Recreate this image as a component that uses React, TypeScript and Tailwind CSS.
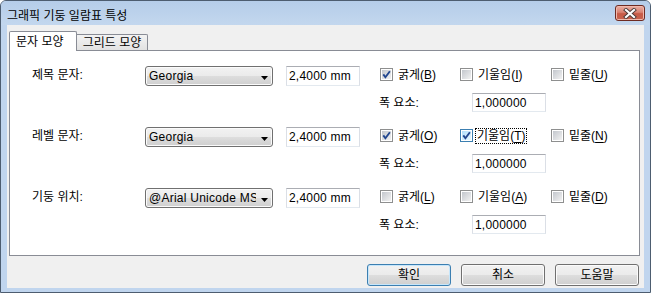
// 그래픽 기둥 일람표 특성 — Win7 basic 스타일 대화상자

const FONT = "font-['Liberation_Sans','Noto_Sans_CJK_KR',sans-serif]";

const BTN_BG =
  "bg-[linear-gradient(to_bottom,#f2f2f2_0%,#ebebeb_48%,#dddddd_52%,#cfcfcf_100%)]";

type CheckItem = {
  pre: string;
  key: string;
  checked?: boolean;
  focused?: boolean;
  width: string;
};

type Row = {
  label: string;
  font: string;
  size: string;
  checks: CheckItem[];
  factor: string;
};

const ROWS: Row[] = [
  {
    label: "제목 문자:",
    font: "Georgia",
    size: "2,4000 mm",
    factor: "1,000000",
    checks: [
      { pre: "굵게", key: "B", checked: true, width: "w-[80px]" },
      { pre: "기울임", key: "I", width: "w-[91px]" },
      { pre: "밑줄", key: "U", width: "w-[70px]" },
    ],
  },
  {
    label: "레벨 문자:",
    font: "Georgia",
    size: "2,4000 mm",
    factor: "1,000000",
    checks: [
      { pre: "굵게", key: "O", checked: true, width: "w-[80px]" },
      { pre: "기울임", key: "T", checked: true, focused: true, width: "w-[91px]" },
      { pre: "밑줄", key: "N", width: "w-[70px]" },
    ],
  },
  {
    label: "기둥 위치:",
    font: "@Arial Unicode MS",
    size: "2,4000 mm",
    factor: "1,000000",
    checks: [
      { pre: "굵게", key: "L", width: "w-[80px]" },
      { pre: "기울임", key: "A", width: "w-[91px]" },
      { pre: "밑줄", key: "D", width: "w-[70px]" },
    ],
  },
];

// ── 체크박스 ────────────────────────────
function CheckBox({ item }: { item: CheckItem }) {
  return (
    <div className={`flex items-center ${item.width}`}>
      <div
        className={
          item.focused
            ? "relative flex h-[13px] w-[13px] shrink-0 items-center justify-center border border-[#3c7fb1] bg-white"
            : "relative flex h-[13px] w-[13px] shrink-0 items-center justify-center border border-[#8e8f8f] bg-white"
        }
      >
        <div
          className={
            item.focused
              ? "h-[9px] w-[9px] bg-gradient-to-br from-[#b1dffd] to-[#e9f7fe]"
              : "h-[9px] w-[9px] bg-gradient-to-br from-[#c3c7cd] to-[#f2f2f2]"
          }
        />
        {item.checked && (
          <svg
            className="absolute left-0 top-0"
            width="11"
            height="11"
            viewBox="0 0 11 11"
          >
            <path
              d="M2.3 5.4 L4.4 8.2 L8.9 2.2"
              fill="none"
              stroke="#21468f"
              strokeWidth="1.9"
            />
          </svg>
        )}
      </div>
      <span
        className={
          item.focused
            ? "ml-[2px] border border-dotted border-black px-[1px] leading-[14px]"
            : "ml-[3px] border border-transparent px-[1px] leading-[14px]"
        }
      >
        {item.pre}(<span className="underline underline-offset-2">{item.key}</span>)
      </span>
    </div>
  );
}

// ── 콤보박스 ────────────────────────────
function Combo({ value }: { value: string }) {
  return (
    <div
      className={`flex h-[20px] w-[128px] shrink-0 items-center rounded-[3px] border border-[#707070] ${BTN_BG} shadow-[inset_0_0_0_1px_#fbfbfb]`}
    >
      <span className="mr-[5px] min-w-0 flex-1 overflow-hidden whitespace-nowrap pl-[3px] leading-[16px] tracking-[0.25px]">
        {value}
      </span>
      <svg className="mr-[4px] mt-[3px] shrink-0" width="7" height="4" viewBox="0 0 7 4">
        <path d="M0 0 H7 L3.5 4 Z" fill="#000" />
      </svg>
    </div>
  );
}

function TextBox({ value, h }: { value: string; h: string }) {
  return (
    <div
      className={`flex ${h} w-[74px] shrink-0 items-center border border-[#abadb3] border-x-[#dbdfe6] border-b-[#e3e9ef] bg-white pl-[2px] leading-[16px] tracking-[0.2px]`}
    >
      {value}
    </div>
  );
}

function Button({ label, primary }: { label: string; primary?: boolean }) {
  return (
    <div
      className={
        primary
          ? `flex h-[22px] w-[84px] items-center justify-center rounded-[3px] border border-[#3c7fb1] ${BTN_BG} shadow-[inset_0_0_0_1px_#c6e6fb]`
          : `flex h-[22px] w-[84px] items-center justify-center rounded-[3px] border border-[#707070] ${BTN_BG} shadow-[inset_0_0_0_1px_#fbfbfb]`
      }
    >
      {label}
    </div>
  );
}

export default function App() {
  return (
    <div className={`${FONT} text-[12px] text-black`}>
      <div className="flex h-[293px] w-[651px] flex-col rounded-t-[6px] border border-[#4d5d70] bg-[#c0d5ee]">
        {/* 타이틀 바 */}
        <div className="flex h-[24px] shrink-0 items-start justify-between rounded-t-[5px] bg-gradient-to-b from-[#b5cde9] to-[#c3d7ee] pl-[6px] pr-[5px]">
          <span className="pt-[7px] leading-[16px]">그래픽 기둥 일람표 특성</span>
          <div className="mt-[4px] flex h-[16px] w-[30px] items-center justify-center rounded-[3px] border border-[#6e2b22] bg-[linear-gradient(to_bottom,#eab0a4_0%,#d98272_45%,#c65a46_55%,#c8644f_100%)] shadow-[inset_0_0_0_1px_#f0b9ad]">
            <svg width="14" height="11" viewBox="0 0 14 11">
              <path d="M3 2 L11 9 M11 2 L3 9" stroke="#4a3a38" strokeWidth="4" strokeLinecap="square" />
              <path d="M3 2 L11 9 M11 2 L3 9" stroke="#ffffff" strokeWidth="2.2" strokeLinecap="square" />
            </svg>
          </div>
        </div>

        {/* 클라이언트 영역 */}
        <div className="mx-[6px] mb-[4px] flex flex-1 flex-col bg-[#f0f0f0] pl-[2px] pt-[6px]">
          {/* 탭 */}
          <div className="flex h-[19px] items-end">
            <div className="relative z-10 -mb-px flex h-[20px] w-[68px] items-center rounded-t-[2px] border border-b-0 border-[#898c95] bg-white pl-[6px]">
              문자 모양
            </div>
            <div className="flex h-[16px] w-[71px] items-center justify-center rounded-tr-[2px] border border-b-0 border-l-0 border-[#898c95] bg-gradient-to-b from-[#f3f3f3] to-[#e2e2e2]">
              그리드 모양
            </div>
          </div>

          {/* 탭 패널 */}
          <div className="flex h-[206px] w-[631px] flex-col border border-[#898c95] bg-white pl-[22px] pt-[15px]">
            {ROWS.map((row) => (
              <div key={row.label} className="mb-[15px] flex items-start">
                <span className="w-[113px] shrink-0 pt-[1px] leading-[16px]">{row.label}</span>
                <div className="flex flex-col">
                  <div className="flex h-[20px] items-center">
                    <Combo value={row.font} />
                    <div className="ml-[13px]">
                      <TextBox value={row.size} h="h-[20px]" />
                    </div>
                    <div className="ml-[20px] -mt-[3px] flex items-center">
                      {row.checks.map((c) => (
                        <CheckBox key={c.key} item={c} />
                      ))}
                    </div>
                  </div>
                  <div className="mt-[7px] flex items-center pl-[234px]">
                    <span className="w-[93px] leading-[16px]">폭 요소:</span>
                    <TextBox value={row.factor} h="h-[19px]" />
                  </div>
                </div>
              </div>
            ))}
          </div>

          {/* 버튼 */}
          <div className="mt-[8px] flex justify-end gap-[10px] pr-[5px]">
            <Button label="확인" primary />
            <Button label="취소" />
            <Button label="도움말" />
          </div>
        </div>
      </div>
    </div>
  );
}
